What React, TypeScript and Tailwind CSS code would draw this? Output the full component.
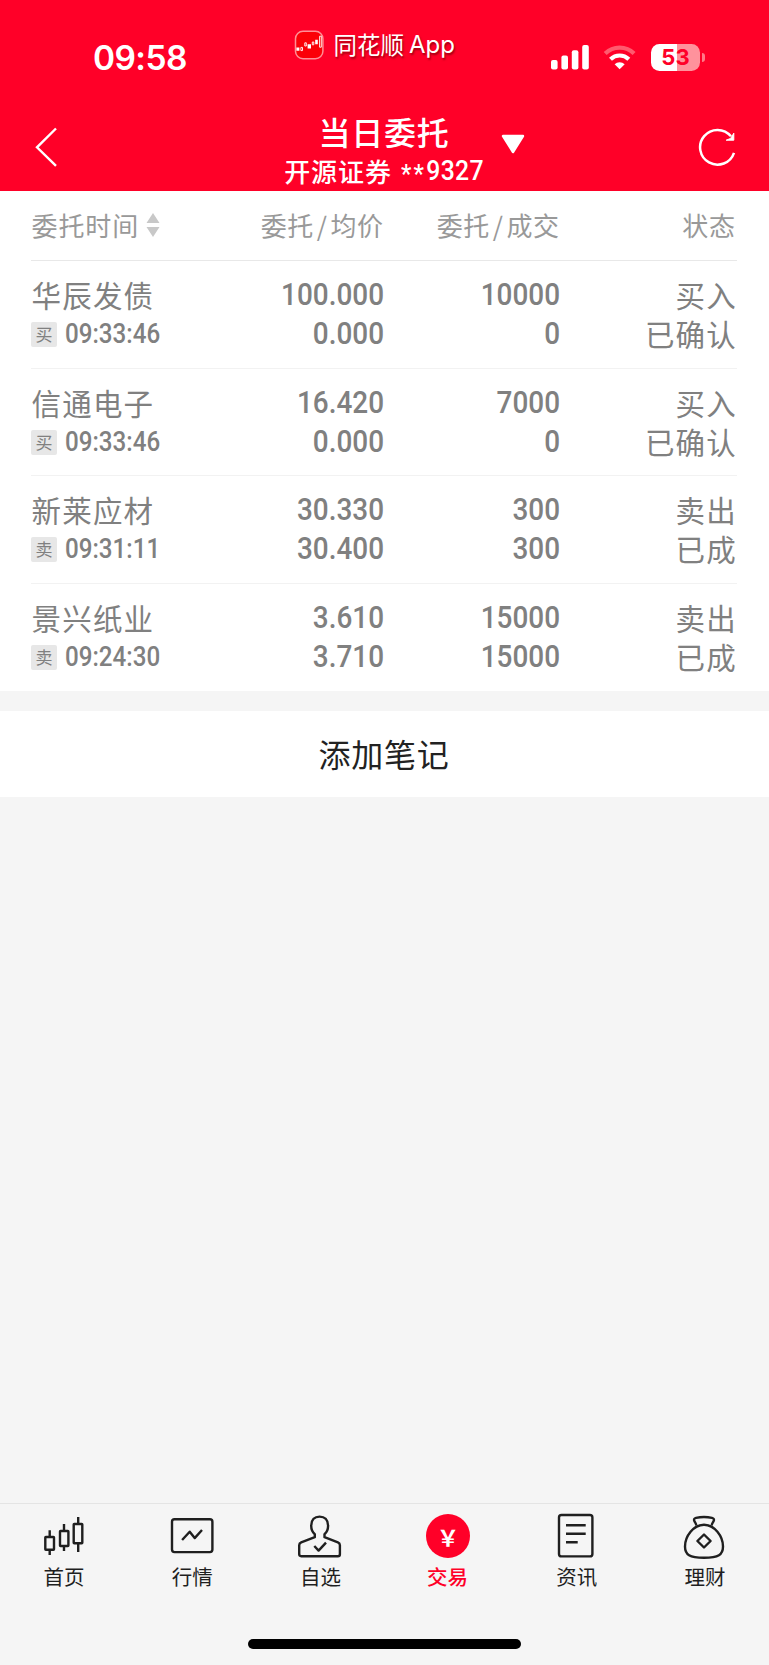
import type { ReactNode } from "react";

type Order = {
  name: string;
  side: string;
  time: string;
  price: string;
  avgPrice: string;
  amount: string;
  filled: string;
  action: string;
  status: string;
};

const orders: Order[] = [
  { name: "华辰发债", side: "买", time: "09:33:46", price: "100.000", avgPrice: "0.000", amount: "10000", filled: "0", action: "买入", status: "已确认" },
  { name: "信通电子", side: "买", time: "09:33:46", price: "16.420", avgPrice: "0.000", amount: "7000", filled: "0", action: "买入", status: "已确认" },
  { name: "新莱应材", side: "卖", time: "09:31:11", price: "30.330", avgPrice: "30.400", amount: "300", filled: "300", action: "卖出", status: "已成" },
  { name: "景兴纸业", side: "卖", time: "09:24:30", price: "3.610", avgPrice: "3.710", amount: "15000", filled: "15000", action: "卖出", status: "已成" },
];

function StatusBar() {
  return (
    <div className="flex h-[104px] items-start">
      <div className="w-[294px] pt-[37.5px] pl-[93px] font-['Inter'] text-[33.5px] leading-[41px] font-semibold tracking-[-0.6px]">
        09:58
      </div>
      <div className="flex w-[257px] items-center pt-[29px]">
        <svg width="30" height="30" viewBox="0 0 30 30" fill="none">
          <rect x="1.5" y="1.3" width="27.4" height="27.4" rx="7.5" fill="#fb0007" stroke="#ff8f96" strokeWidth="1.5" />
          <path d="M2.4 17.400h3v3.400h-3zM13.600 14.200h3.400v4.200h-3.400zM21.200 9.800h2.600v4.400h-2.600z" fill="#fff" />
          <path
            d="M6.900 17.400h1.600v3.200H6.900zM10.800 12.800h1.500v3.200h-1.500zM18.300 12h1.500v2.800h-1.500zM25.600 6.200h1.700v11h-1.700z"
            stroke="#fff"
            strokeWidth=".9"
          />
        </svg>
        <div className="ml-[9.5px] flex items-center gap-[5px] text-[23.5px] leading-[30px] [text-shadow:1px_2px_2px_rgba(90,0,0,0.6)]">
          <span className="pb-[2px]">同花顺</span>
          <span className="font-['Inter'] text-[24px]">App</span>
        </div>
      </div>
      <div className="flex items-center pt-[43px]">
        <svg width="39" height="28" viewBox="0 0 39 28" fill="#fff">
          <rect x="0" y="17" width="6.6" height="9.4" rx="2" />
          <rect x="10.4" y="12.4" width="6.6" height="14" rx="2" />
          <rect x="20.8" y="7.2" width="6.6" height="19.2" rx="2" />
          <rect x="31.2" y="2" width="6.6" height="24.4" rx="2" />
        </svg>
        <svg className="ml-[13px]" width="34" height="28" viewBox="0 0 34 28" fill="none" strokeWidth="4.2">
          <path d="M2.2 10.6a20.6 20.6 0 0 1 28.9 0" stroke="#ff5a6e" />
          <path d="M7.5 16.2a13.2 13.2 0 0 1 18.3 0" stroke="#fff" />
          <path d="M11.6 21.3a7.3 7.3 0 0 1 10.1 0l-5.05 5z" fill="#fff" />
        </svg>
        <div className="ml-[14px] flex h-[27px] w-[49px] items-center justify-center rounded-[8.5px] bg-linear-to-r from-white from-54% to-[#ff929c] to-54% font-['Inter'] text-[22px] font-bold text-[#ff0028]">
          53
        </div>
        <div className="ml-[2px] h-[9px] w-[3px] rounded-r-full bg-[#ff7a88]" />
      </div>
    </div>
  );
}

function TitleBar() {
  return (
    <div className="flex h-[87px]">
      <svg className="mt-[22px] ml-[34px]" width="26" height="42" viewBox="0 0 26 42" fill="none">
        <path d="M22 2.5 3 21.3l19 18.5" stroke="#fff" strokeWidth="2.4" />
      </svg>
      <div className="ml-[214px] flex w-[220px] flex-col items-center whitespace-nowrap">
        <h1 className="mt-[7px] text-[32px] leading-[40px] font-medium tracking-[0.8px]">当日委托</h1>
        <div className="flex h-[40px] items-center text-[26px] leading-[38px] font-medium tracking-[0.9px]">
          <span className="pb-px">开源证券</span>
          <span className="ml-[9px] flex w-[83px] origin-left scale-x-[0.9] font-['Roboto'] text-[27.5px] tracking-[0.4px]">
            <span className="pt-[5px] text-[26px] tracking-[2.5px]">**</span>
            <span className="pt-[2px]">9327</span>
          </span>
        </div>
      </div>
      <svg className="mt-[29px] ml-[6px]" width="26" height="22" viewBox="0 0 26 22">
        <path d="M3 3h20L13 19z" fill="#fff" stroke="#fff" strokeWidth="2.4" strokeLinejoin="round" />
      </svg>
      <svg className="mt-[22px] ml-[172px]" width="42" height="42" viewBox="0 0 42 42" fill="none" stroke="#fff" strokeWidth="2.5">
        <path d="M36 26.800a17.400 17.400 0 1 1-3-16.500" />
        <path d="M35.800 7.200v7h-7.600l4.400-1.800z" fill="#fff" strokeWidth="1" />
      </svg>
    </div>
  );
}

function SortIcon() {
  return (
    <svg className="ml-[7px]" width="14" height="26" viewBox="0 0 14 26" fill="#c8c8c8">
      <path d="M7 1 13.500 11H.5zM7 25 13.500 15H.5z" />
    </svg>
  );
}

function TableHeader() {
  return (
    <div className="flex h-[70px] items-center border-b border-[#e8e8e8] pb-[2px] text-[26px] text-[#999]">
      <div className="flex w-[172px] items-center pl-[0.5px] tracking-[0.9px]">
        委托时间
        <SortIcon />
      </div>
      <div className="w-[180.500px] text-right tracking-[0.5px]">委托<i className="px-[3px] not-italic">/</i>均价</div>
      <div className="w-[176px] text-right tracking-[0.5px]">委托<i className="px-[3px] not-italic">/</i>成交</div>
      <div className="flex-1 pr-px text-right tracking-[0.9px]">状态</div>
    </div>
  );
}

function Numbers({ top, bottom }: { top: string; bottom: string }) {
  return (
    <div className="origin-right scale-x-[0.9] text-right font-['Roboto'] text-[31px] font-medium">
      <div>{top}</div>
      <div>{bottom}</div>
    </div>
  );
}

function OrderRow({ order }: { order: Order }) {
  return (
    <div className="flex h-[107.6px] border-b border-[#f2f2f2] pt-[13px] text-[29.5px] leading-[39px] tracking-[1.2px] text-[#808080] last:border-b-0">
      <div className="w-[172px]">
        <div className="pt-px pl-[0.5px]">{order.name}</div>
        <div className="flex items-center pt-px">
          <span className="flex h-[25px] w-[26px] items-center justify-center rounded-[2px] bg-[#e7e7e7] pb-px text-[17px] leading-[24px] tracking-normal">
            {order.side}
          </span>
          <span className="ml-[8px] origin-left scale-x-[0.895] font-['Roboto'] text-[27px] font-medium tracking-normal">
            {order.time}
          </span>
        </div>
      </div>
      <div className="w-[181px] pt-px tracking-normal">
        <Numbers top={order.price} bottom={order.avgPrice} />
      </div>
      <div className="w-[176px] pt-px tracking-normal">
        <Numbers top={order.amount} bottom={order.filled} />
      </div>
      <div className="flex-1 pt-px text-right">
        <div>{order.action}</div>
        <div>{order.status}</div>
      </div>
    </div>
  );
}

function NavIcon({ children }: { children: ReactNode }) {
  return (
    <svg width="48" height="48" viewBox="0 0 48 48" fill="none" stroke="#1f1f1f" strokeWidth="2.4" strokeLinejoin="round">
      {children}
    </svg>
  );
}

const tabs: { label: string; active?: boolean; icon: ReactNode }[] = [
  {
    label: "首页",
    icon: (
      <NavIcon>
        <rect x="5.3" y="25" width="8.7" height="12.8" rx=".5" />
        <rect x="20" y="19" width="8.4" height="15" rx=".5" />
        <rect x="33.7" y="12" width="8.6" height="19.2" rx=".5" />
        <path d="M9.7 18.3V25m0 12.8V43M24 12v7m0 15v5M38.2 5v7m0 19.2V40" />
      </NavIcon>
    ),
  },
  {
    label: "行情",
    icon: (
      <NavIcon>
        <rect x="4" y="7.3" width="40.4" height="32.8" rx="2.5" />
        <path d="m14.1 28 7.6-8.3 5 6.4L34 18" />
      </NavIcon>
    ),
  },
  {
    label: "自选",
    icon: (
      <NavIcon>
        <path d="M18.8 22.2c-2.2-1.8-3.6-4.6-3.6-8.4 0-6 3.4-9.200 8.400-9.200s8.500 3.200 8.500 9.200c0 3.800-1.400 6.600-3.600 8.400v3l13.400 5.200c1.500.6 2 1.400 2 2.800v9c0 1.400-.6 2-2 2H5.200c-1.400 0-2-.6-2-2v-9c0-1.400.6-2.200 2-2.800l13.600-5.200z" />
        <path d="m18.300 34 4.300 4.600 7.400-8" />
      </NavIcon>
    ),
  },
  {
    label: "交易",
    active: true,
    icon: (
      <div className="my-[2px] mr-px flex size-[44px] items-center justify-center rounded-full bg-[#ff0028] text-[22px] leading-none font-bold text-white">
        <span className="pb-[1px]">￥</span>
      </div>
    ),
  },
  {
    label: "资讯",
    icon: (
      <NavIcon>
        <rect x="6" y="3" width="33.4" height="41.4" rx="2.5" />
        <path d="M13 13.300h19.700M13 21.700h19.700M13 30.300h11.700" />
      </NavIcon>
    ),
  },
  {
    label: "理财",
    icon: (
      <NavIcon>
        <path d="M15.400 13.400c-.4-2-1.200-2.800-2-4.200-.9-1.700-.2-2.900 1.600-3.300 5-1.100 11-1.100 16 0 1.800.4 2.500 1.600 1.600 3.300-.8 1.400-1.600 2.200-2 4.200" />
        <path d="M23 12.700c-10.500 0-19 11.500-19 21.800 0 8.300 4.500 11.200 19 11.200s19-2.900 19-11.200c0-10.300-8.500-21.800-19-21.800z" />
        <path d="m23 22.500 6.600 6.500-6.600 6.500-6.600-6.500z" />
      </NavIcon>
    ),
  },
];

function TabBar() {
  return (
    <nav className="grid h-[136px] grid-cols-6 border-t border-[#e4e4e4] pt-[8px]">
      {tabs.map((tab) => (
        <div key={tab.label} className="flex flex-col items-center">
          {tab.icon}
          <span
            className={
              tab.active
                ? "pr-[2px] text-[20.5px] leading-[32px] font-medium text-[#ff0028]"
                : "text-[20.5px] leading-[32px] text-[#1f1f1f]"
            }
          >
            {tab.label}
          </span>
        </div>
      ))}
    </nav>
  );
}

export default function App() {
  return (
    <div className="flex h-[1665px] w-[769px] flex-col overflow-hidden bg-[#f5f5f5] font-['Noto_Sans_CJK_SC',sans-serif]">
      <header className="h-[191px] bg-[#ff0028] text-white">
        <StatusBar />
        <TitleBar />
      </header>

      <section className="h-[500px] bg-white pr-[32px] pl-[31px]">
        <TableHeader />
        {orders.map((order) => (
          <OrderRow key={order.name} order={order} />
        ))}
      </section>

      <button className="mt-[20px] h-[86px] bg-white pr-px pb-[3px] text-[32px] tracking-[0.8px] text-[#222]">
        添加笔记
      </button>

      <main className="flex-1" />

      <TabBar />
      <div className="mb-[16px] ml-[248px] h-[10px] w-[273px] rounded-full bg-black" />
    </div>
  );
}
